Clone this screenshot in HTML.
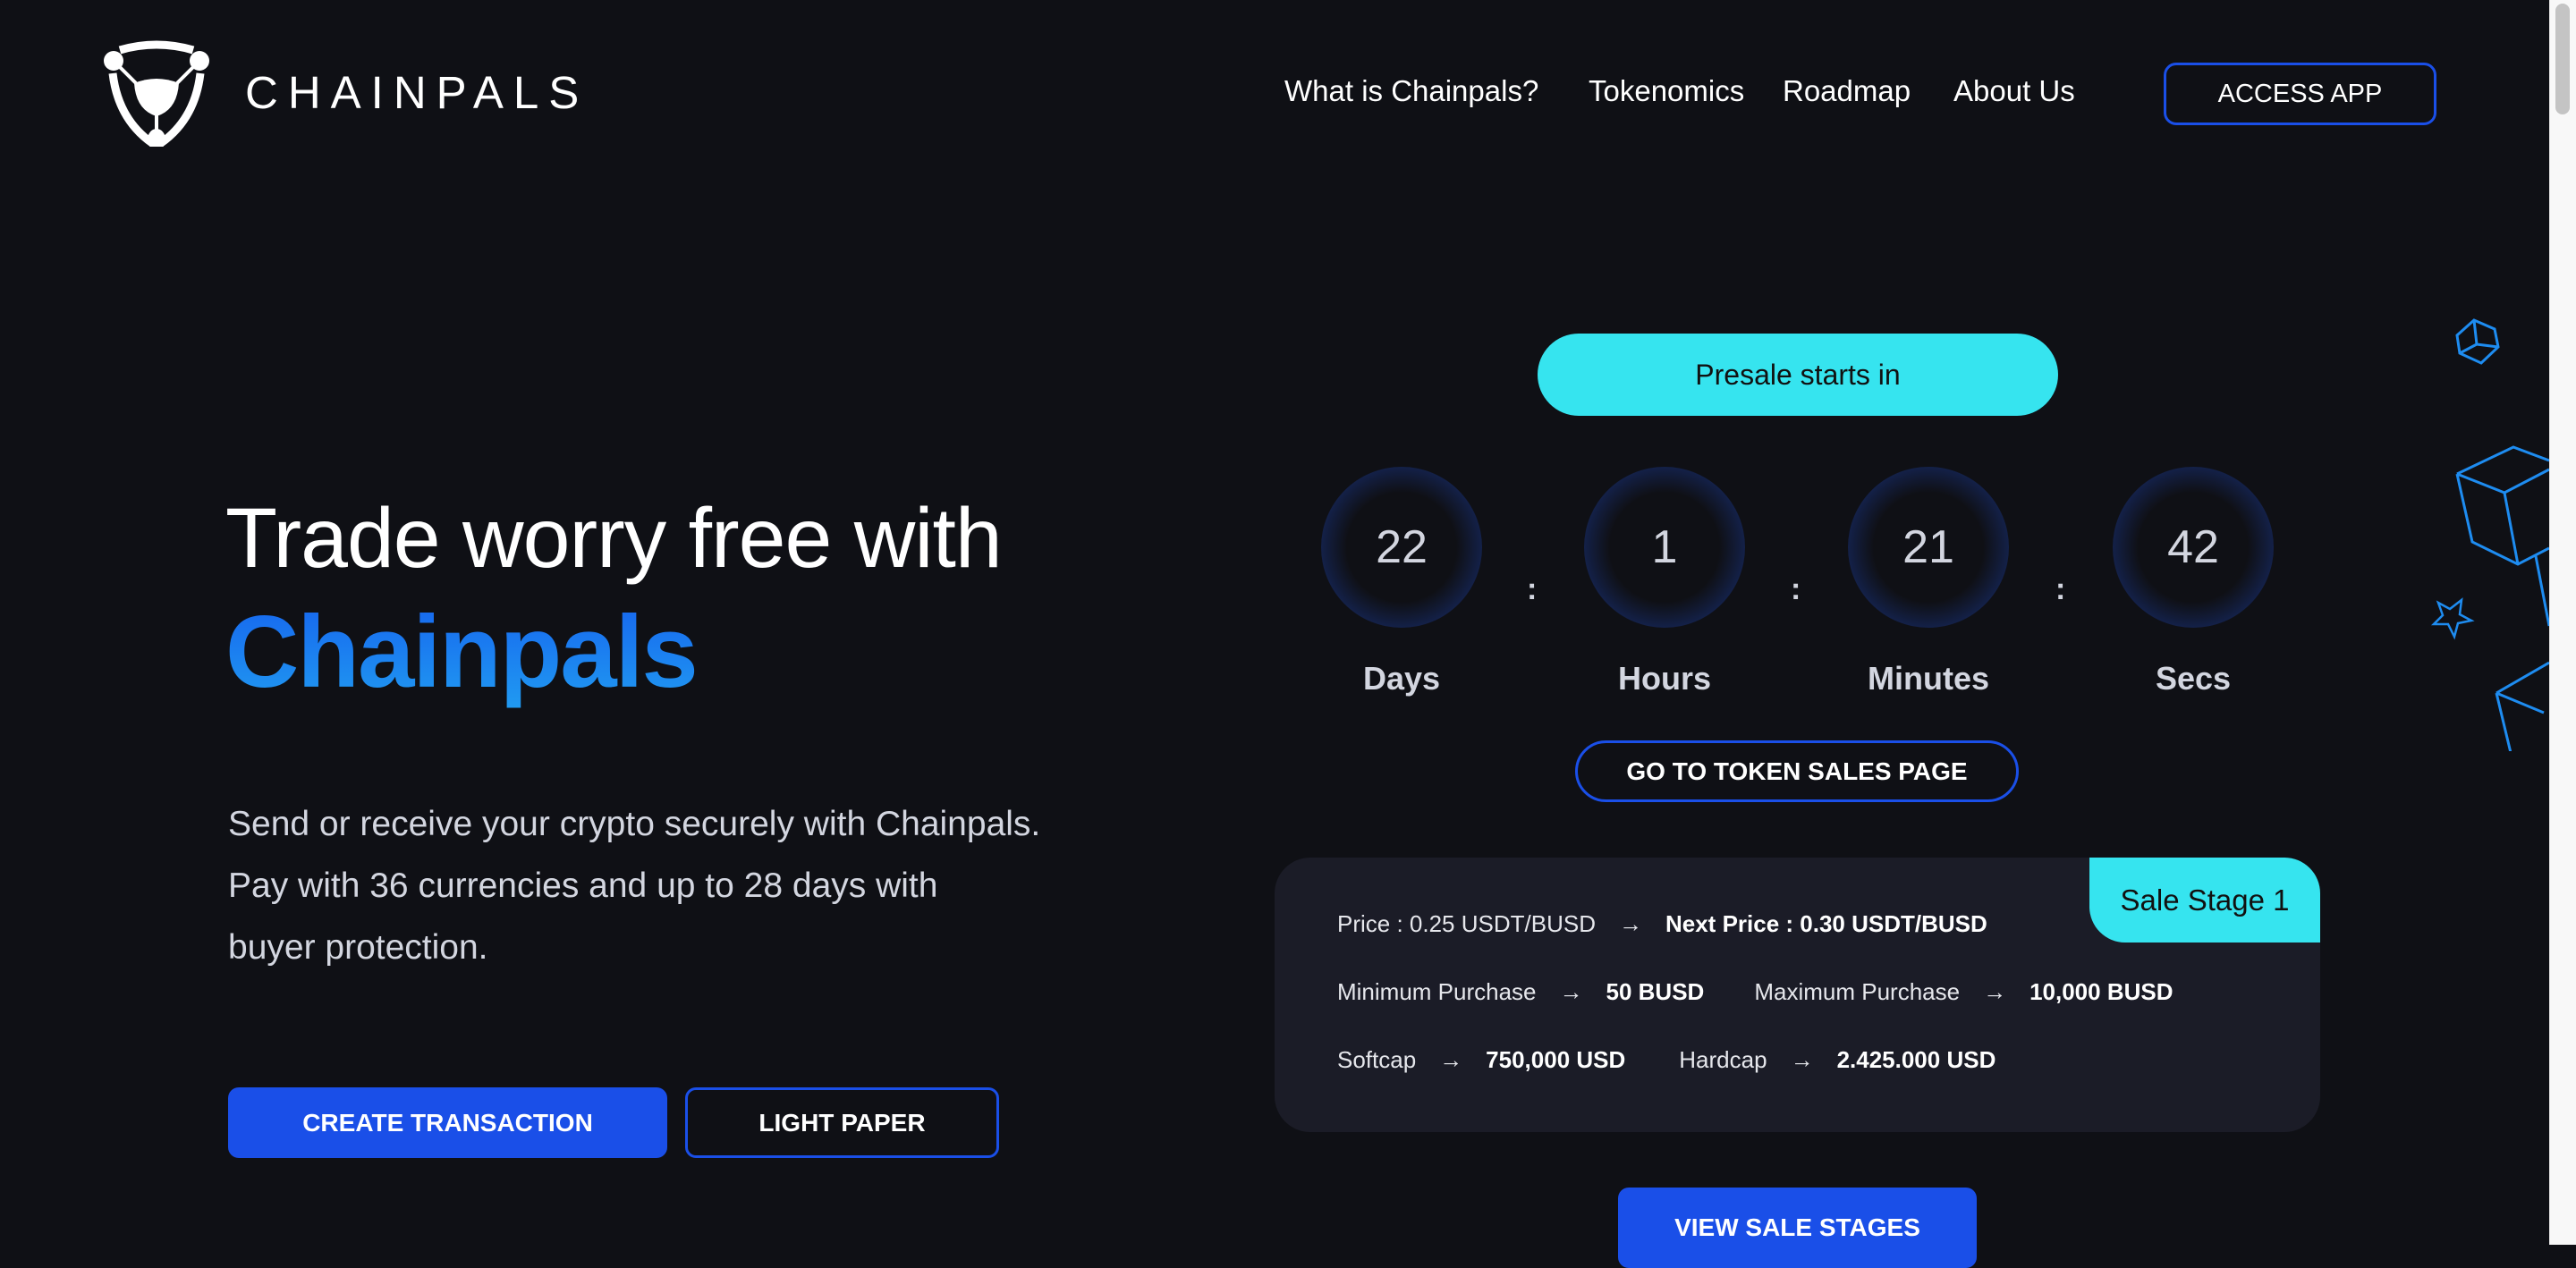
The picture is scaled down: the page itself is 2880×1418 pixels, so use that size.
<!DOCTYPE html>
<html><head><meta charset="utf-8"><style>
*{margin:0;padding:0;box-sizing:border-box}
body{width:2880px;height:1392px;background:#0f1015;overflow:hidden;position:relative;font-family:"Liberation Sans",sans-serif;color:#fff}
.a{position:absolute;white-space:nowrap}
.nav{font-size:33px;top:83px;color:#fff}
.btn{position:absolute;display:flex;align-items:center;justify-content:center;font-size:28px;font-weight:bold;color:#fff}
.circ{position:absolute;width:180px;height:180px;border-radius:50%;background:radial-gradient(circle,#0f1015 48%,#152659 78%,#1b3790 100%);display:flex;align-items:center;justify-content:center;font-size:52px;color:#d3d6e0;top:522px}
.lbl{position:absolute;top:738px;width:240px;text-align:center;font-size:36px;font-weight:bold;color:#d3d6e0}
.col{position:absolute;top:640px;font-size:34px;color:#d3d6e0;font-weight:bold}
.row{position:absolute;left:1495px;font-size:26px;color:#e6e7ec}
.row b{color:#fff}
.ar{display:inline-block;margin:0 26px}
</style></head><body>
<svg class="a" style="left:112px;top:38px" width="126" height="126" viewBox="0 0 126 126">
<path d="M22 18 Q63 6 104 18" stroke="#fff" stroke-width="9" fill="none"/>
<path d="M14 44 Q20 95 58 122" stroke="#fff" stroke-width="9" fill="none"/>
<path d="M112 44 Q106 95 68 122" stroke="#fff" stroke-width="9" fill="none"/>
<circle cx="15" cy="30" r="11" fill="#fff"/><circle cx="111" cy="30" r="11" fill="#fff"/>
<ellipse cx="63" cy="118" rx="10" ry="12" fill="#fff"/>
<path d="M15 30 L40 55 M111 30 L86 55 M63 90 L63 110" stroke="#fff" stroke-width="4"/>
<path d="M38 55 Q63 45 88 55 Q86 85 63 92 Q40 85 38 55Z" fill="#fff"/>
</svg>
<div class="a" style="left:274px;top:74px;font-size:51px;letter-spacing:11px;color:#fff">CHAINPALS</div>
<div class="a nav" style="left:1436px">What is Chainpals?</div>
<div class="a nav" style="left:1776px">Tokenomics</div>
<div class="a nav" style="left:1993px">Roadmap</div>
<div class="a nav" style="left:2184px">About Us</div>
<div class="btn" style="left:2419px;top:70px;width:305px;height:70px;border:3px solid #1a4fe8;border-radius:14px;font-weight:normal;font-size:29px">ACCESS APP</div>

<div class="a" style="left:252px;top:548px;font-size:95px;color:#fff;font-weight:normal;letter-spacing:-1px">Trade worry free with</div>
<div class="a" style="left:252px;top:664px;font-size:114px;font-weight:bold;letter-spacing:-2px;background:linear-gradient(#1663ee,#22a4f2);-webkit-background-clip:text;color:transparent;padding-bottom:20px">Chainpals</div>
<div class="a" style="left:255px;top:887px;font-size:39px;line-height:69px;color:#d3d6e0;white-space:normal;width:1000px">Send or receive your crypto securely with Chainpals.<br>Pay with 36 currencies and up to 28 days with<br>buyer protection.</div>
<div class="btn" style="left:255px;top:1216px;width:491px;height:79px;background:#1a4fe8;border-radius:12px">CREATE TRANSACTION</div>
<div class="btn" style="left:766px;top:1216px;width:351px;height:79px;border:3px solid #1a4fe8;border-radius:12px">LIGHT PAPER</div>

<div class="btn" style="left:1719px;top:373px;width:582px;height:92px;background:#36e4ef;border-radius:46px;color:#111;font-weight:normal;font-size:32px">Presale starts in</div>
<div class="circ" style="left:1477px">22</div>
<div class="circ" style="left:1771px">1</div>
<div class="circ" style="left:2066px">21</div>
<div class="circ" style="left:2362px">42</div>
<div class="col" style="left:1707px">:</div>
<div class="col" style="left:2002px">:</div>
<div class="col" style="left:2298px">:</div>
<div class="lbl" style="left:1447px">Days</div>
<div class="lbl" style="left:1741px">Hours</div>
<div class="lbl" style="left:2036px">Minutes</div>
<div class="lbl" style="left:2332px">Secs</div>
<div class="btn" style="left:1761px;top:828px;width:496px;height:69px;border:3px solid #1a4fe8;border-radius:35px;font-size:28px">GO TO TOKEN SALES PAGE</div>

<div class="a" style="left:1425px;top:959px;width:1169px;height:307px;background:#1b1c27;border-radius:40px"></div>
<div class="btn" style="left:2336px;top:959px;width:258px;height:95px;background:#36e4ef;border-radius:0 40px 0 40px;color:#111;font-weight:normal;font-size:33px">Sale Stage 1</div>
<div class="row" style="top:1018px">Price : 0.25 USDT/BUSD<span class="ar">→</span><b>Next Price : 0.30 USDT/BUSD</b></div>
<div class="row" style="top:1094px">Minimum Purchase<span class="ar">→</span><b>50 BUSD</b><span style="margin-left:56px">Maximum Purchase</span><span class="ar">→</span><b>10,000 BUSD</b></div>
<div class="row" style="top:1170px">Softcap<span class="ar">→</span><b>750,000 USD</b><span style="margin-left:60px">Hardcap</span><span class="ar">→</span><b>2.425.000 USD</b></div>
<div class="btn" style="left:1809px;top:1328px;width:401px;height:90px;background:#1a4fe8;border-radius:12px">VIEW SALE STAGES</div>

<svg class="a" style="left:2700px;top:340px" width="150" height="500" viewBox="2700 340 150 500" fill="none" stroke="#1e8cf0" stroke-width="3">
<path d="M2766 358 L2789 368 L2793 388 L2774 406 L2750 395 L2747 375 Z M2766 358 L2769 385 L2793 388 M2769 385 L2750 395"/>
<path d="M2747 530 L2810 500 L2850 515 M2747 530 L2800 551 L2850 525 M2800 551 L2815 631 M2747 530 L2764 606 L2815 631 L2850 613 M2835 622 L2850 700"/>
<path d="M2726 674 L2739 681 L2752 671 L2750 687 L2763 694 L2748 697 L2744 712 L2737 698 L2721 698 L2731 688 Z" stroke-width="2.5"/>
<path d="M2791 775 L2850 741 M2791 775 L2844 797 M2791 775 L2808 846"/>
</svg>
<div class="a" style="left:2850px;top:0;width:30px;height:1392px;background:#f8f8f8;border-left:1px solid #e6e6e6"></div>
<div class="a" style="left:2857px;top:4px;width:16px;height:124px;background:#c4c4c4;border-radius:8px"></div>
</body></html>
